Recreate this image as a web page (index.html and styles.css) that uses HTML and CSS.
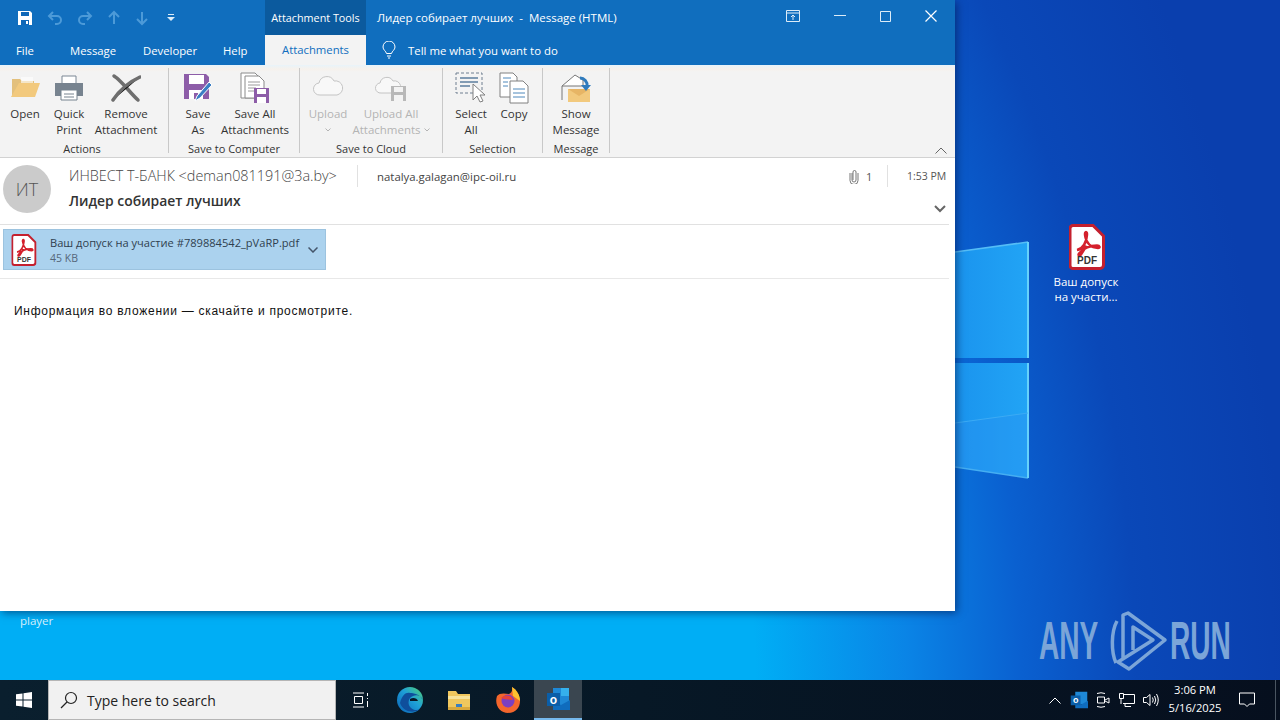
FILE: index.html
```html
<!doctype html>
<html>
  <head>
    <title>Лидер собирает лучших - Message (HTML)</title>
    <link rel="stylesheet" href="styles.css">
  </head>
  <body>
    <svg class="defs" width="0" height="0">
      <symbol id="pdf" viewBox="0 0 36 46">
        <path d="M4 1.500h20l10.500 10.500v29a3.500 3.500 0 0 1-3.500 3.500h-27a3 3 0 0 1-3-3v-37a3 3 0 0 1 3-3z" fill="#fff" stroke="#c4202e" stroke-width="3"/>
        <path d="M8 26c5-1 9-6 10-15 .5-4-2.500-4-2 0 1 8 6 13 13 13 2.500 0 2-2.500-1-2.500-7 0-14 3-18 8-1.500 2 .5 3 2 1 2-3 4-6 5-9" fill="none" stroke="#d4202c" stroke-width="2.400"/>
      </symbol>
    </svg>

    <div class="desktop">
      <svg class="logo" width="76" height="250" viewBox="0 0 76 250">
        <defs>
          <linearGradient id="pane" x1="0" y1="0" x2="1" y2="0">
            <stop offset="0" stop-color="#1a94ee"/>
            <stop offset="1" stop-color="#22a4f5"/>
          </linearGradient>
        </defs>
        <path d="M0 12L73 2V118H0z" fill="url(#pane)"/>
        <path d="M0 123H73V238L0 227z" fill="url(#pane)"/>
        <path d="M0 183L73 173V238L0 227z" fill="#2a8ff0" opacity=".35"/>
        <path d="M0 12L73 2" stroke="#55bdf6" stroke-width="1.500"/>
        <path d="M0 227L73 238" stroke="#45aef2" stroke-width="1.500"/>
        <path d="M73 2V118M73 123V238" stroke="#66d2fa" stroke-width="2"/>
        <path d="M0 183L73 173" stroke="#3cabf4"/>
      </svg>

      <div class="desk-icon">
        <svg width="36" height="46" viewBox="0 0 36 46"><use href="#pdf" width="36" height="46"/><text x="18" y="40" class="pdf-text">PDF</text></svg>
        <div>Ваш допуск<br>на участи...</div>
      </div>

      <div class="player">player</div>

      <div class="watermark">
        <span>ANY</span>
        <svg width="60" height="62" viewBox="0 0 60 62" fill="none" stroke="#7ba5d8" stroke-width="3.500" stroke-linejoin="round">
          <path d="M8 11C2 22 2 42 7 53"/>
          <path d="M14 48V5L19 3L56 30L20 59L9 52L44 30L24 17V40"/>
        </svg>
        <span>RUN</span>
      </div>

      <div class="window">
        <div class="titlebar">
          <div class="qat">
            <svg width="16" height="16" viewBox="0 0 16 16"><path d="M1 1h12l2 2v12H1z" fill="#fff"/><path d="M4 2h8v4H4zM4 10h8v5H4z" fill="#1068b8"/><path d="M9 11h2v3H9z" fill="#fff"/></svg>
            <svg width="16" height="16" viewBox="0 0 16 16" fill="none" stroke="#4c9ad8" stroke-width="2"><path d="M6 2L2 6l4 4"/><path d="M2 6h8a4 4 0 0 1 0 8H8"/></svg>
            <svg width="16" height="16" viewBox="0 0 16 16" fill="none" stroke="#4c9ad8" stroke-width="2"><path d="M10 2l4 4-4 4"/><path d="M14 6H6a4 4 0 0 0 0 8h2"/></svg>
            <svg width="14" height="16" viewBox="0 0 14 16" fill="none" stroke="#4c9ad8" stroke-width="2"><path d="M2 7l5-5 5 5M7 2v12"/></svg>
            <svg width="14" height="16" viewBox="0 0 14 16" fill="none" stroke="#4c9ad8" stroke-width="2"><path d="M2 9l5 5 5-5M7 14V2"/></svg>
            <svg class="qat-more" width="10" height="10" viewBox="0 0 10 10"><path d="M2 1h6v1H2zM1 4h8L5 8z" fill="#dcecf8"/></svg>
          </div>
          <div class="tools-tab">Attachment Tools</div>
          <div class="title-text">Лидер собирает лучших&nbsp; -&nbsp; Message (HTML)</div>
          <div class="winctl">
            <svg width="14" height="12" viewBox="0 0 14 12" fill="none" stroke="#dcecf8"><path d="M.5.500h13v11H.5zM.5 3h13M7 10V5M5 7l2-2 2 2"/></svg>
            <svg width="12" height="12" viewBox="0 0 12 12" stroke="#dcecf8"><path d="M0 5.500h12"/></svg>
            <svg width="11" height="11" viewBox="0 0 11 11" fill="none" stroke="#dcecf8"><path d="M.5.500h10v10H.5z"/></svg>
            <svg width="12" height="12" viewBox="0 0 12 12" stroke="#fff" stroke-width="1.200"><path d="M.5.500l11 11M11.500.500l-11 11"/></svg>
          </div>
        </div>

        <div class="tabs">
          <div class="tab tab-file">File</div>
          <div class="tab tab-message">Message</div>
          <div class="tab tab-dev">Developer</div>
          <div class="tab tab-help">Help</div>
          <div class="tab tab-active">Attachments</div>
          <svg class="bulb" width="14" height="18" viewBox="0 0 14 18" fill="none" stroke="#fff"><path d="M4.500 12.500C4 10 1 9 1 6a6 6 0 0 1 12 0c0 3-3 4-3.500 6.500zM5 15h4M6 17h2"/></svg>
          <div class="tell">Tell me what you want to do</div>
        </div>

        <div class="ribbon">
          <div class="group g1">
            <div class="items">
              <div class="rbtn w44">
                <svg width="32" height="30" viewBox="0 0 32 30"><path d="M3 6h8l2 2h12v14H3z" fill="#e3c07c"/><path d="M10 10h21l-5 14H2z" fill="#f2c97d"/><path d="M12 4h12v6H12z" fill="#fff" opacity=".6"/></svg>
                <div class="rlabel">Open</div>
              </div>
              <div class="rbtn w44">
                <svg width="30" height="30" viewBox="0 0 30 30"><path d="M8 3h14v8H8z" fill="#fff" stroke="#7a8794"/><path d="M1 10h28v13H1z" fill="#77838f"/><path d="M7 17h16v10H7z" fill="#fff" stroke="#77838f"/><path d="M10 21h10M10 24h10" stroke="#77838f"/></svg>
                <div class="rlabel">Quick<br>Print</div>
              </div>
              <div class="rbtn w70">
                <svg width="30" height="30" viewBox="0 0 30 30" stroke="#6e6e6e" stroke-width="3.500" stroke-linecap="round"><path d="M3 3c8 5 16 17 24 24"/><path d="M29 4C18 9 8 18 2 27"/></svg>
                <div class="rlabel">Remove<br>Attachment</div>
              </div>
            </div>
            <div class="glabel">Actions</div>
          </div>

          <div class="group g2">
            <div class="items">
              <div class="rbtn w40">
                <svg width="30" height="30" viewBox="0 0 30 30"><path d="M1 1h22l3 3v22H1z" fill="#8d5da8"/><path d="M6 2h15v9H6z" fill="#fff"/><path d="M6 17h14v9H6z" fill="#fff"/><path d="M11 20h4v6h-4z" fill="#8d5da8"/><path d="M12 28l2-5L26 9l3 3-12 13z" fill="#3b7fc4" stroke="#fff"/></svg>
                <div class="rlabel">Save<br>As</div>
              </div>
              <div class="rbtn w74">
                <svg width="30" height="32" viewBox="0 0 30 32" fill="none"><path d="M1 1h14l3 3v22H1z" fill="#fff" stroke="#8a8a8a"/><path d="M5 4h14l5 5v17H5z" fill="#fff" stroke="#8a8a8a"/><path d="M8 10h12M8 13h12M8 16h8M8 19h6" stroke="#9a9a9a"/><path d="M14 16h15v15H14z" fill="#8d5da8"/><path d="M17 17h9v5h-9zM17 25h9v6h-9z" fill="#fff"/></svg>
                <div class="rlabel">Save All<br>Attachments</div>
              </div>
            </div>
            <div class="glabel">Save to Computer</div>
          </div>

          <div class="group g3">
            <div class="items">
              <div class="rbtn w44 off">
                <svg width="32" height="30" viewBox="0 0 32 30" fill="#f8f8f8" stroke="#c4c4c4"><path d="M8 22a6 6 0 0 1-1-12 8 8 0 0 1 15-2 7 7 0 0 1 3 14z"/></svg>
                <div class="rlabel">Upload<br><svg class="chev" width="6" height="4" viewBox="0 0 6 4" fill="none" stroke="#b4b4b4"><path d="M.5.500L3 3 5.500.500"/></svg></div>
              </div>
              <div class="rbtn w82 off">
                <svg width="32" height="30" viewBox="0 0 32 30" fill="#f8f8f8" stroke="#c4c4c4"><path d="M6 20a5 5 0 0 1-1-10 7 7 0 0 1 13-2 6 6 0 0 1 3 12z"/><path d="M16 13h15v15H16z" fill="#b8b8b8" stroke="none"/><path d="M19 14h9v5h-9zM19 22h9v6h-9z" fill="#f3f3f3" stroke="none"/></svg>
                <div class="rlabel">Upload All<br>Attachments <svg class="chev" width="6" height="4" viewBox="0 0 6 4" fill="none" stroke="#b4b4b4"><path d="M.5.500L3 3 5.500.500"/></svg></div>
              </div>
            </div>
            <div class="glabel">Save to Cloud</div>
          </div>

          <div class="group g4">
            <div class="items">
              <div class="rbtn w40">
                <svg width="32" height="32" viewBox="0 0 32 32" fill="none"><path d="M1 1h26v20H1z" stroke="#6f7f90" stroke-dasharray="3 2"/><path d="M5 6h18M5 10h18M5 14h10" stroke="#5d7f9f" stroke-width="1.500"/><path d="M18 12v16l4-4 3 6 3-1-3-6h5z" fill="#fff" stroke="#808080"/></svg>
                <div class="rlabel">Select<br>All</div>
              </div>
              <div class="rbtn w40 ml3">
                <svg width="30" height="32" viewBox="0 0 30 32" fill="none"><path d="M1 1h13l4 4v20H1z" fill="#fff" stroke="#808080"/><path d="M11 9h13l5 5v17H11z" fill="#fff" stroke="#808080"/><path d="M4 6h8M4 10h5M4 14h5M14 17h12M14 21h12M14 25h12" stroke="#4e88bb"/></svg>
                <div class="rlabel">Copy</div>
              </div>
            </div>
            <div class="glabel">Selection</div>
          </div>

          <div class="group g5">
            <div class="items">
              <div class="rbtn w60">
                <svg width="32" height="32" viewBox="0 0 32 32" fill="none"><path d="M2 14L15 3l8 5v6H2v14" fill="#fff" stroke="#777"/><path d="M8 17h22v13H8z" fill="#f2c97d"/><path d="M8 17l11 7 11-7z" fill="#e7b565"/><path d="M20 6a7 7 0 0 1 7 8" stroke="#2f7bbd" stroke-width="3"/><path d="M21 13h10l-5 6z" fill="#2f7bbd"/></svg>
                <div class="rlabel">Show<br>Message</div>
              </div>
            </div>
            <div class="glabel">Message</div>
          </div>
          <svg class="collapse" width="12" height="7" viewBox="0 0 12 7" fill="none" stroke="#666"><path d="M.5 6.500L6 1l5.500 5.500"/></svg>
        </div>

        <div class="header">
          <div class="avatar">ИТ</div>
          <div class="senders">
            <div class="from-row">
              <span class="from">ИНВЕСТ Т-БАНК &lt;deman081191@3a.by&gt;</span>
              <span class="to">natalya.galagan@ipc-oil.ru</span>
            </div>
            <div class="subject">Лидер собирает лучших</div>
          </div>
          <div class="meta">
            <div class="meta-top">
              <svg width="10" height="15" viewBox="0 0 10 15" fill="none" stroke="#777"><path d="M3 4v7a2 2 0 0 0 4 0V3a1.500 1.500 0 0 0-3 0v8"/><path d="M1 4v7.500a4 4 0 0 0 8 0V4"/></svg>
              <span class="count">1</span>
              <span class="time">1:53 PM</span>
            </div>
            <svg class="expand" width="12" height="8" viewBox="0 0 12 8" fill="none" stroke="#666" stroke-width="2"><path d="M1 1l5 5 5-5"/></svg>
          </div>
        </div>

        <div class="attach-row">
          <div class="attachment">
            <svg width="26" height="32" viewBox="0 0 36 46"><use href="#pdf" width="36" height="46"/><text x="18" y="40" class="pdf-text">PDF</text></svg>
            <div class="att-info">
              <div class="att-name">Ваш допуск на участие #789884542_pVaRP.pdf</div>
              <div class="att-size">45 KB</div>
            </div>
            <svg class="att-chev" width="10" height="6" viewBox="0 0 10 6" fill="none" stroke="#44556a" stroke-width="1.500"><path d="M.5.500L5 5 9.500.500"/></svg>
          </div>
        </div>

        <div class="message">Информация во вложении — скачайте и просмотрите.</div>
      </div>
    </div>

    <div class="taskbar">
      <div class="start">
        <svg width="16" height="16" viewBox="0 0 16 16" fill="#fff"><path d="M0 2.300L6.500 1.400V7.500H0zM7.500 1.300L16 0V7.500H7.500zM0 8.500H6.500V14.600L0 13.700zM7.500 8.500H16V16L7.500 14.700z"/></svg>
      </div>
      <div class="search">
        <svg width="18" height="18" viewBox="0 0 18 18" fill="none" stroke="#222" stroke-width="1.200"><circle cx="11" cy="7" r="5.500"/><path d="M7 11L1 17"/></svg>
        <span>Type here to search</span>
      </div>
      <div class="task-btn">
        <svg width="16" height="16" viewBox="0 0 16 16" fill="none" stroke="#fff"><path d="M0 1h11M0 15h11M1.500 4.500h8v7h-8zM14.500 1v3M14.500 6v1M14.500 9v6"/></svg>
      </div>
      <div class="task-btn">
        <svg width="26" height="26" viewBox="0 0 26 26"><defs><linearGradient id="edge" x1="0" y1="1" x2="1" y2="0"><stop offset="0" stop-color="#0a62b5"/><stop offset=".55" stop-color="#1ea0d8"/><stop offset="1" stop-color="#52d273"/></linearGradient></defs><circle cx="13" cy="13" r="13" fill="url(#edge)"/><path d="M26 14c-1-5-6-7-10-5-5 2-6 8-2 12 2 2 6 3 9 1-6 5-17 3-20-6C5 8 9 5 13 6c5 0 11 2 13 8z" fill="#0f4f9c"/><path d="M13 12c3-2 7-1 8 2H13z" fill="#071826"/></svg>
      </div>
      <div class="task-btn">
        <svg width="24" height="24" viewBox="0 0 24 24"><path d="M1 3h8l2 3h12v16H1z" fill="#f0c75e"/><path d="M1 8h22v3H1z" fill="#f8e39b"/><path d="M9 16h6v4H9z" fill="#3a7fc1"/><path d="M1 19h22v3H1z" fill="#d9a83d"/></svg>
      </div>
      <div class="task-btn">
        <svg width="26" height="28" viewBox="0 0 26 28"><path d="M2 10c-3 9 3 17 11 17s12-6 12-12c0-6-4-11-8-14 1 4-1 6-3 7-5-1-10-1-12 2z" fill="#f3662c"/><path d="M17 1c5 3 8 8 8 14l-7-5z" fill="#fcc130"/><circle cx="13" cy="15" r="6.500" fill="#7b3fc0"/><path d="M6 12c4-4 11-3 12 2-4-1-8 0-12-2z" fill="#e6423a"/></svg>
      </div>
      <div class="task-btn task-active">
        <svg width="24" height="24" viewBox="0 0 24 24"><path d="M7 1h16v17H7z" fill="#1e88d6"/><path d="M15 1h8v8h-8z" fill="#35b0ec"/><path d="M7 13l8 5 9-5v10H7z" fill="#0f6cbd"/><path d="M1 6h13v13H1z" fill="#0a5ea8"/><text x="7.500" y="16.500" class="o-text">o</text></svg>
      </div>
      <div class="tray">
        <div class="tray-item"><svg width="12" height="7" viewBox="0 0 12 7" fill="none" stroke="#fff"><path d="M.5 6.500L6 1l5.500 5.500"/></svg></div>
        <div class="tray-item"><svg width="18" height="18" viewBox="0 0 24 24"><path d="M7 1h16v17H7z" fill="#1e88d6"/><path d="M7 13l8 5 9-5v10H7z" fill="#0f6cbd"/><path d="M1 6h13v13H1z" fill="#0a5ea8"/><text x="7.500" y="16.500" class="o-text">o</text></svg></div>
        <div class="tray-item"><svg width="14" height="16" viewBox="0 0 14 16" fill="none" stroke="#fff"><path d="M1 1.500q4-1.500 8 0M1 14.500q4 1.500 8 0M1.500 5h7v6h-7zM9 8l4-2v5l-4-2"/></svg></div>
        <div class="tray-item"><svg width="16" height="14" viewBox="0 0 16 14" fill="none" stroke="#fff"><path d="M4 1.500h11.500v9H4M.5.500h4v5h-4zM2 5.500v5.500M6 10.500v3h6"/></svg></div>
        <div class="tray-item"><svg width="16" height="14" viewBox="0 0 16 14" fill="none" stroke="#fff"><path d="M.5 4.500h3L7 1.500v11l-3.500-3h-3zM9.500 4.500q1.500 2.500 0 5M11.500 3q2.500 4 0 8M13.500 1q3.500 6 0 12"/></svg></div>
      </div>
      <div class="clock">3:06 PM<br>5/16/2025</div>
      <div class="notify">
        <svg width="16" height="16" viewBox="0 0 16 16" fill="none" stroke="#fff"><path d="M.5 1h15v11h-5l-2.500 2.500L5.500 12h-5z"/></svg>
      </div>
      <div class="show-desktop"></div>
    </div>
  </body>
</html>
```

FILE: styles.css
```css
html, body {
  margin: 0;
  padding: 0;
}

body {
  width: 1280px;
  height: 720px;
  overflow: hidden;
  font-family: "Open Sans", sans-serif;
  font-size: 12px;
  display: flex;
  flex-direction: column;
}

svg {
  display: block;
  flex: none;
}

.defs {
  position: absolute;
}

.pdf-text {
  font-family: "Liberation Sans", sans-serif;
  font-size: 10px;
  font-weight: bold;
  text-anchor: middle;
  fill: #333;
}

.o-text {
  font-family: "Liberation Sans", sans-serif;
  font-size: 12px;
  font-weight: bold;
  text-anchor: middle;
  fill: #fff;
}

/* desktop */
.desktop {
  position: relative;
  height: 680px;
  background: radial-gradient(ellipse 760px 1100px at 300px 700px, #00aef5 0%, #00aef5 60%, #0a84e6 80%, #0a60d0 95%, #0a48b8 110%, #0a3fae 130%);
  overflow: hidden;
}

.logo {
  position: absolute;
  left: 955px;
  top: 240px;
}

.desk-icon {
  position: absolute;
  left: 1046px;
  top: 224px;
  width: 80px;
  color: #fff;
  text-align: center;
  font-size: 11.500px;
  line-height: 15px;
}

.desk-icon svg {
  margin: 0 auto 4px;
  transform: translateX(1px);
}

.player {
  position: absolute;
  left: 20px;
  top: 613px;
  color: #d8f0fc;
  font-size: 11.500px;
}

.watermark {
  position: absolute;
  left: 1039px;
  top: 610px;
  display: flex;
  align-items: center;
  color: #7ba5d8;
  font-family: "Liberation Sans", sans-serif;
  font-size: 53px;
  font-weight: bold;
  line-height: 62px;
}

.watermark svg {
  margin: 0 1px 0 9px;
}

.watermark span {
  display: inline-block;
  width: 61px;
  transform: scaleX(.53);
  transform-origin: left center;
}

/* outlook window */
.window {
  position: absolute;
  left: 0;
  top: 0;
  width: 955px;
  height: 611px;
  background: #fff;
  box-shadow: 2px 2px 8px rgba(0, 20, 70, .55);
  display: flex;
  flex-direction: column;
}

.titlebar {
  height: 35px;
  background: #106ebe;
  color: #fff;
  display: flex;
  align-items: center;
}

.qat {
  width: 265px;
  display: flex;
  align-items: center;
  gap: 14px;
  padding-left: 17px;
  box-sizing: border-box;
}

.qat-more {
  margin-left: 3px;
}

.tools-tab {
  width: 101px;
  height: 35px;
  line-height: 35px;
  text-align: center;
  background: #0b5a9e;
  font-size: 10.800px;
}

.title-text {
  margin-left: 11px;
  font-size: 11.500px;
  flex: 1;
}

.winctl {
  display: flex;
  align-items: center;
  gap: 34px;
  padding-right: 18px;
  margin-bottom: 3px;
}

.tabs {
  height: 30px;
  background: #106ebe;
  color: #fff;
  display: flex;
  align-items: center;
}

.tab {
  font-size: 11.300px;
}

.tab-file {
  margin-left: 16px;
  width: 19px;
}

.tab-message {
  margin-left: 35px;
  width: 46px;
}

.tab-dev {
  margin-left: 27px;
  width: 53px;
}

.tab-help {
  margin-left: 27px;
  width: 25px;
}

.tab-active {
  margin-left: 17px;
  width: 101px;
  height: 30px;
  line-height: 30px;
  text-align: center;
  background: #f3f3f3;
  color: #106ebe;
}

.bulb {
  margin-left: 16px;
}

.tell {
  margin-left: 12px;
  font-size: 11.400px;
}

/* ribbon */
.ribbon {
  position: relative;
  height: 92px;
  background: linear-gradient(#e8f3fa 0, #f6f1ec 4px, #f3f3f3 7px);
  border-bottom: 1px solid #d2d2d2;
  display: flex;
  color: #333;
}

.group {
  box-sizing: border-box;
  height: 85px;
  margin-top: 3px;
  border-right: 1px solid #c8c8c8;
  display: flex;
  flex-direction: column;
}

.g1 { width: 169px; }
.g2 { width: 131px; }
.g3 { width: 143px; }
.g4 { width: 100px; }
.g5 { width: 67px; }

.items {
  display: flex;
  flex: none;
  height: 74px;
}

.g1 .items { padding-left: 3px; }
.g2 .items { padding-left: 9px; }
.g3 .items { padding-left: 6px; }
.g4 .items { padding-left: 8px; }
.g5 .items { padding-left: 3px; }

.g1 .glabel {
  padding-right: 4px;
}

.rbtn {
  display: flex;
  flex-direction: column;
  align-items: center;
  box-sizing: border-box;
  padding-top: 4px;
}

.rbtn > svg {
  height: 32px;
}

.w40 { width: 40px; }
.w44 { width: 44px; }
.w60 { width: 60px; }
.w70 { width: 70px; }
.w74 { width: 74px; }
.w82 { width: 82px; }

.ml3 {
  margin-left: 3px;
}

.rlabel {
  margin-top: 2px;
  font-size: 11.500px;
  line-height: 16px;
  text-align: center;
  white-space: nowrap;
}

.off {
  color: #b4b4b4;
}

.chev {
  display: inline-block;
  vertical-align: 2px;
}

.glabel {
  flex: none;
  text-align: center;
  font-size: 11px;
  line-height: 14px;
}

.collapse {
  position: absolute;
  right: 8px;
  bottom: 3px;
}

/* message header */
.header {
  height: 66px;
  margin-right: 6px;
  border-bottom: 1px solid #e1e1e1;
  display: flex;
  color: #444;
}

.avatar {
  width: 48px;
  height: 48px;
  margin: 7px 0 0 3px;
  border-radius: 50%;
  background: #cbcbcb;
  color: #555;
  font-size: 18px;
  font-weight: 300;
  line-height: 48px;
  text-align: center;
}

.senders {
  flex: 1;
  margin-left: 18px;
}

.from-row {
  display: flex;
  align-items: center;
  height: 22px;
  margin-top: 7px;
}

.from {
  box-sizing: border-box;
  width: 289px;
  font-size: 14.400px;
  font-weight: 300;
  line-height: 22px;
  border-right: 1px solid #e1e1e1;
  color: #444;
  white-space: nowrap;
}

.to {
  padding-left: 19px;
  font-size: 11.400px;
}

.subject {
  margin-top: 4px;
  font-size: 13.900px;
  font-weight: 600;
  color: #333;
}

.meta {
  width: 110px;
}

.meta-top {
  display: flex;
  align-items: center;
  height: 22px;
  margin-top: 7px;
  padding-left: 10px;
  font-size: 11px;
  color: #555;
}

.count {
  margin-left: 7px;
  width: 11px;
}

.time {
  box-sizing: border-box;
  width: 60px;
  margin-left: 10px;
  padding-left: 19px;
  font-size: 10.500px;
  line-height: 22px;
  border-left: 1px solid #e1e1e1;
  white-space: nowrap;
}

.expand {
  margin: 18px 0 0 95px;
}

/* attachment */
.attach-row {
  height: 54px;
  margin-right: 6px;
  border-bottom: 1px solid #e8e8e8;
  box-sizing: border-box;
  padding: 4px 0 0 3px;
}

.attachment {
  box-sizing: border-box;
  width: 323px;
  height: 41px;
  background: #abd2ee;
  border: 1px solid #9cc3df;
  display: flex;
  align-items: center;
  padding-left: 7px;
  color: #2f3f4f;
}

.att-info {
  margin-left: 13px;
  flex: 1;
  line-height: 15px;
  padding-top: 1px;
}

.att-name {
  font-size: 11.100px;
  white-space: nowrap;
}

.att-size {
  font-size: 10.500px;
  line-height: 16px;
  color: #55677a;
}

.att-chev {
  margin-right: 7px;
}

.message {
  margin: 25px 0 0 14px;
  font-family: "Liberation Sans", sans-serif;
  font-size: 12px;
  letter-spacing: .73px;
  color: #111;
}

/* taskbar */
.taskbar {
  height: 40px;
  background: linear-gradient(to right, #0a1f2e, #071826 50%, #060f1e);
  display: flex;
  align-items: center;
  color: #fff;
}

.start {
  width: 48px;
  display: flex;
  justify-content: center;
}

.search {
  box-sizing: border-box;
  width: 288px;
  height: 40px;
  background: #f1f1f1;
  border: 1px solid #b5b5b5;
  display: flex;
  align-items: center;
  padding-left: 11px;
  gap: 9px;
  color: #222;
  font-size: 14px;
}

.task-btn {
  width: 49px;
  height: 40px;
  display: flex;
  align-items: center;
  justify-content: center;
}

.task-active {
  box-sizing: border-box;
  width: 48px;
  margin-left: 2px;
  background: #3a4650;
  border-bottom: 2px solid #76b9ed;
}

.tray {
  margin-left: auto;
  display: flex;
  align-items: center;
}

.tray-item {
  width: 24px;
  display: flex;
  justify-content: center;
}

.clock {
  width: 64px;
  margin-bottom: 2px;
  text-align: center;
  font-size: 11.200px;
  line-height: 18px;
}

.notify {
  width: 28px;
  margin-left: 6px;
  display: flex;
  justify-content: center;
}

.show-desktop {
  width: 1px;
  height: 40px;
  margin: 0 4px 0 14px;
  background: #4a5561;
}
```
